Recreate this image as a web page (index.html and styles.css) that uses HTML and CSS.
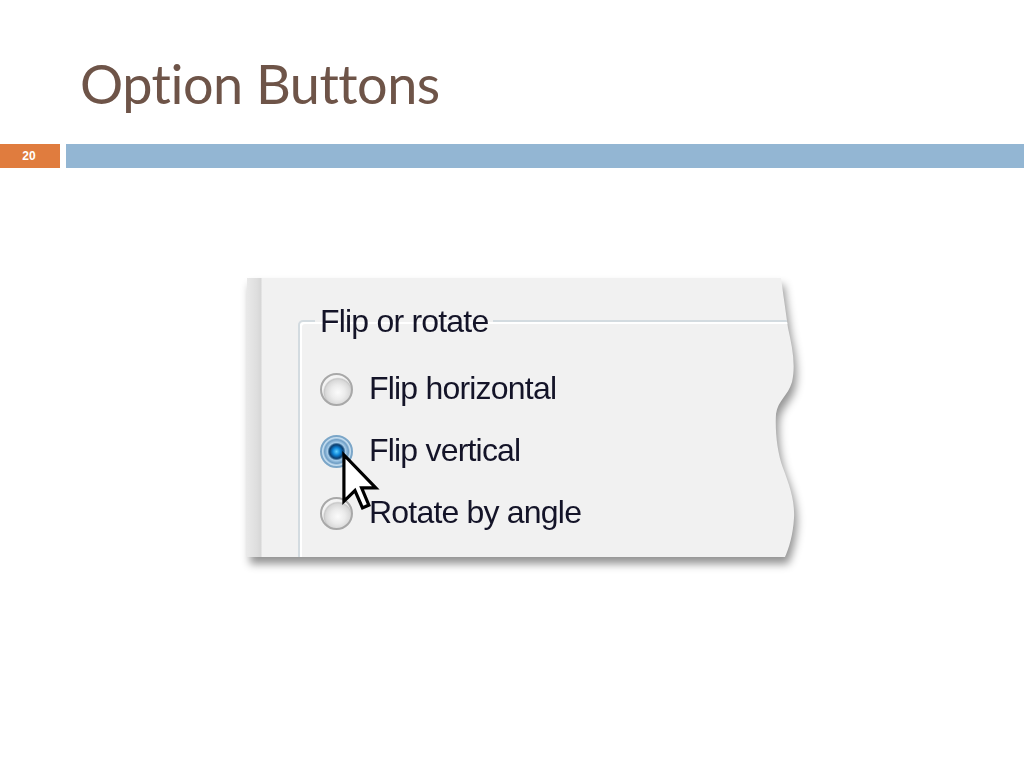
FILE: index.html
```html
<!DOCTYPE html>
<html>
<head>
<meta charset="utf-8">
<link rel="stylesheet" href="styles.css">
</head>
<body>
<div class="slide">
  <h1 class="title">Option Buttons</h1>
  <div class="bar">
    <div class="num">20</div>
    <div class="band"></div>
  </div>
  <div class="stage">
    <div class="shot">
      <div class="panel">
        <fieldset class="group">
          <legend class="legend">Flip or rotate</legend>
          <div class="opts">
            <div class="opt"><span class="radio"></span><span class="label">Flip horizontal</span></div>
            <div class="opt"><span class="radio checked"></span><span class="label">Flip vertical</span></div>
            <div class="opt"><span class="radio"></span><span class="label">Rotate by angle</span></div>
          </div>
        </fieldset>
        <svg class="cursor" width="36" height="58" viewBox="-1 -1 12.4 20" aria-hidden="true">
          <path d="M0 0 L0 16 L3.8 12.3 L6.4 18.3 L8.6 17.3 L6.1 11.4 L11 11.4 Z" fill="#fff" stroke="#000" stroke-width="1.1" stroke-linejoin="miter"/>
        </svg>
      </div>
    </div>
  </div>
</div>
</body>
</html>
```

FILE: styles.css
```css
html, body {
  margin: 0;
  padding: 0;
  background: #fff;
}
.slide {
  width: 1024px;
  height: 768px;
  overflow: hidden;
  position: relative;
}
.title {
  margin: 0;
  padding: 52px 0 0 80px;
  height: 92px;
  box-sizing: content-box;
  font-family: "Lato", "DejaVu Sans", sans-serif;
  font-weight: 400;
  font-size: 54px;
  line-height: 64px;
  color: #6e5448;
  letter-spacing: -0.5px;
}
.bar {
  display: flex;
  gap: 6px;
  height: 24px;
}
.num {
  width: 60px;
  background: #e07c3e;
  color: #fff;
  font-family: "Liberation Sans", Arial, sans-serif;
  font-weight: 700;
  font-size: 12px;
  line-height: 24px;
  text-align: center;
  padding-right: 2px;
  box-sizing: border-box;
}
.band {
  flex: 1;
  background: #93b6d3;
}
.stage {
  padding: 110px 0 0 247px;
}
.shot {
  width: 560px;
  height: 296px;
  filter: drop-shadow(3px 7px 4px rgba(0, 0, 0, 0.42));
}
.panel {
  position: relative;
  width: 550px;
  height: 279px;
  box-sizing: border-box;
  padding: 25px 0 0 51px;
  overflow: hidden;
  background:
    linear-gradient(90deg, #e9e9e9 0px, #dedede 10px, #d6d6d6 14px, #f1f1f1 15px, #f1f1f1 100%);
  clip-path: path("M0 0 H534 C536 15 539 35 541 50 C545 68 549 86 545 104 C541 118 531 122 529 136 C528 152 530 174 536 190 C542 206 548 222 547 240 C546 257 542 270 538 279 H0 Z");
}
.group {
  margin: 0;
  padding: 19px 0 0 20px;
  width: 640px;
  height: 320px;
  box-sizing: border-box;
  border: 2px solid #d3dbe0;
  border-radius: 5px;
  box-shadow: inset 2px 2px 0 #ffffff;
  min-inline-size: 0;
}
.legend {
  padding: 0 5px;
  margin-left: -5px;
  font-family: "Liberation Sans", Arial, sans-serif;
  font-size: 32px;
  line-height: 36px;
  letter-spacing: -0.8px;
  color: #141428;
}
.opts {
  display: flex;
  flex-direction: column;
}
.opt {
  display: flex;
  align-items: center;
  height: 62px;
  gap: 16px;
}
.radio {
  width: 33px;
  height: 33px;
  border-radius: 50%;
  box-sizing: border-box;
  border: 2px solid #a8a8a8;
  background: radial-gradient(circle at 55% 60%, #fbfbfb 0%, #ececec 30%, #d9d9d9 52%, #c8c8c8 58%, #f3f3f3 64%, #f7f7f7 100%);
  flex: none;
}
.radio.checked {
  border: 2px solid #7ba6c8;
  background: radial-gradient(circle at 50% 50%, #5fd0ff 0%, #0f86d8 18%, #0a3f73 33%, #2d5f8a 37%, #a7cce9 44%, #6e9dc4 58%, #c3dcef 66%, #dcebf6 100%);
}
.label {
  font-family: "Liberation Sans", Arial, sans-serif;
  font-size: 32px;
  line-height: 36px;
  letter-spacing: -0.8px;
  color: #141428;
  margin-top: -2px;
}
.cursor {
  position: absolute;
  left: 94px;
  top: 174px;
  overflow: visible;
}
```
